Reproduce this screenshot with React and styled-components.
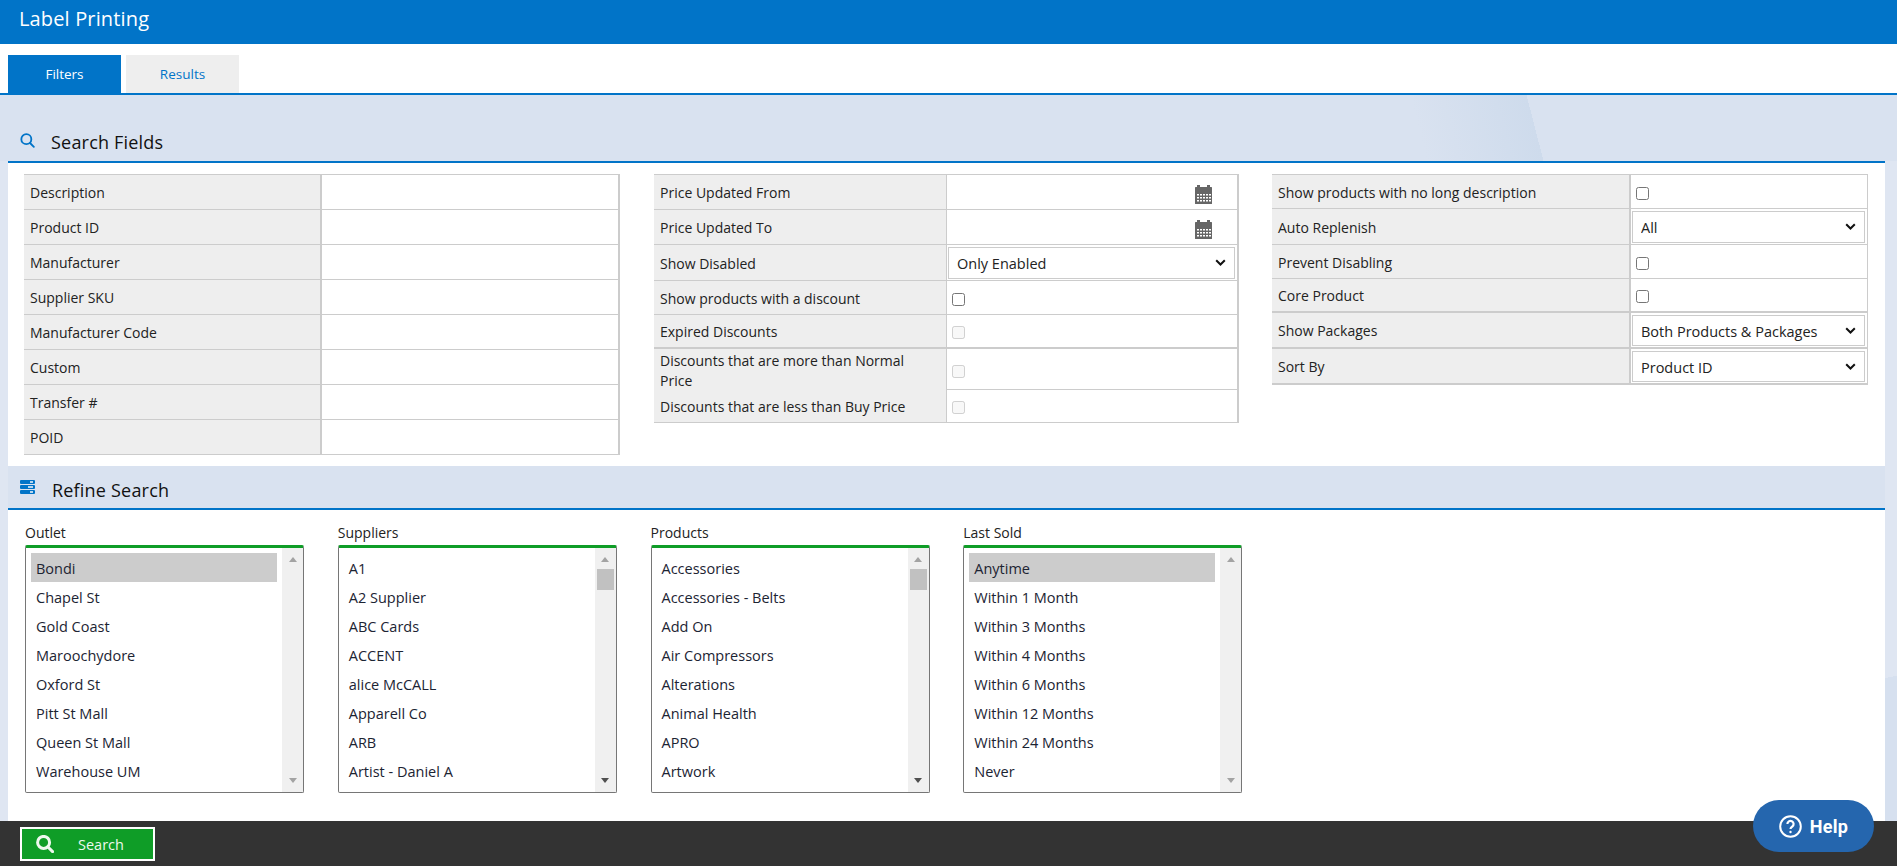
import React from 'react';
import styled, { createGlobalStyle } from 'styled-components';

const Global = createGlobalStyle`
  html, body { margin: 0; padding: 0; height: 100%; overflow: hidden; }
  body { font-family: "Open Sans", "Liberation Sans", sans-serif; font-size: 14px; color: #222; }
  * { box-sizing: border-box; }
`;

const BLUE = '#0174c8';
const GREEN = '#0f9d27';
const LINE = '#cccccc';
const CHEVRON = "url(\"data:image/svg+xml,%3Csvg xmlns='http://www.w3.org/2000/svg' width='11' height='7' viewBox='0 0 11 7'%3E%3Cpath d='M1.2 1.2l4.3 4.3 4.3-4.3' fill='none' stroke='%23111' stroke-width='2'/%3E%3C/svg%3E\")";

const Page = styled.div`
  height: 866px;
  display: flex;
  flex-direction: column;
  background: linear-gradient(168deg, #dfe6f2 0, #dfe6f2 85%, #d6e0ef 85%);
`;

const Header = styled.header`
  height: 44px;
  flex: none;
  background: ${BLUE};
  color: #fff;
  font-size: 20px;
  letter-spacing: 0.15px;
  line-height: 38px;
  padding-left: 19px;
`;

const TabBar = styled.nav`
  height: 51px;
  flex: none;
  display: flex;
  align-items: flex-end;
  gap: 5px;
  padding-left: 8px;
  background: #fff;
  border-bottom: 2px solid ${BLUE};
`;

const Tab = styled.button`
  width: 113px;
  height: 38px;
  border: 0;
  padding: 0;
  font: 13.5px "Open Sans", sans-serif;
  background: ${p => (p.$active ? BLUE : '#eeeeee')};
  color: ${p => (p.$active ? '#fff' : BLUE)};
`;

const Content = styled.main`
  flex: 1;
  min-height: 0;
  display: flex;
  flex-direction: column;
  padding: 0 12px 0 8px;
`;

const Band = styled.div`
  height: ${p => p.$height}px;
  flex: none;
  display: flex;
  align-items: flex-end;
  gap: ${p => p.$gap}px;
  padding: 0 0 ${p => p.$pad}px 12px;
  font-size: 18px;
  letter-spacing: 0.2px;
  line-height: 26px;
  color: #111;
  background: #d9e2f0;
`;

const TopBand = styled(Band)`
  margin: 0 -12px 0 -8px;
  padding-left: 20px;
  background: linear-gradient(75.6deg, transparent 1382px, #cedbec 1495px, transparent 1495px), #d9e2f0;
`;

const BandIcon = styled.span`
  flex: none;
  display: flex;
  margin-bottom: ${p => p.$lift}px;
  color: ${BLUE};
`;

const BandRule = styled.div`
  height: 2px;
  flex: none;
  background: ${BLUE};
`;

const FieldsPanel = styled.section`
  height: 303px;
  flex: none;
  background: #fff;
  padding: 11px 0 0 16px;
  display: grid;
  grid-template-columns: 630px 618px 596px;
  align-items: start;
`;

const Row = styled.div`
  height: ${p => p.$height}px;
  display: grid;
  grid-template-columns: ${p => p.$label}px 1fr;
  border-bottom: ${p => (p.$thick ? 2 : 1)}px solid ${LINE};
`;

const Label = styled.div`
  display: flex;
  align-items: center;
  padding: 2px 20px 0 6px;
  line-height: 20px;
  background: #eeeeee;
`;

const FieldTable = styled.div`
  width: ${p => p.$width}px;
  border-top: 1px solid ${LINE};
  border-right: ${p => p.$edge}px solid ${LINE};
  background: #fff;

  ${Label} {
    border-right: ${p => p.$divider}px solid ${LINE};
  }
`;

const Value = styled.div`
  display: flex;
  align-items: center;
  min-width: 0;
`;

const TextInput = styled.input`
  width: 100%;
  height: 100%;
  border: 0;
  outline: 0;
  padding: 0 6px;
  background: transparent;
`;

const DateCell = styled(Value)`
  justify-content: flex-end;
  padding: 4px 25px 0 0;
`;

const Check = styled.input.attrs({ type: 'checkbox' })`
  margin: 3px 0 0 5px;
  width: 13px;
  height: 13px;
`;

const Select = styled.select`
  appearance: none;
  width: 100%;
  height: calc(100% - 3px);
  margin: 0 2px 0 1px;
  border: 1px solid ${LINE};
  border-radius: 0;
  background: #fff ${CHEVRON} no-repeat right 8px center;
  color: #222;
  padding: 2px 0 0 8px;
  font: 14.5px "Open Sans", sans-serif;
  outline: 0;
`;

const RefinePanel = styled.section`
  flex: 1;
  min-height: 0;
  background: #fff;
  padding: 13px 0 0 17px;
  display: flex;
  gap: 33.75px;
  align-items: flex-start;
`;

const ListColumn = styled.div`
  width: 279px;
  flex: none;
`;

const ListTitle = styled.div`
  line-height: 20px;
  margin-bottom: 2px;
`;

const ListBox = styled.div`
  height: 248px;
  display: flex;
  border: 1px solid #767676;
  border-top: 3px solid ${GREEN};
  border-radius: 2px;
  background: #fff;
`;

const Items = styled.ul`
  flex: 1;
  min-width: 0;
  list-style: none;
  margin: 0;
  padding: 5px 5px 0;
`;

const Item = styled.li`
  height: 29px;
  line-height: 31px;
  padding-left: 5px;
  font-size: 14.5px;
  color: #1c2433;
  background: ${p => (p.$selected ? '#cccccc' : 'transparent')};
`;

const ScrollBar = styled.div`
  width: 21px;
  flex: none;
  display: flex;
  flex-direction: column;
  align-items: center;
  padding: 9px 0 9px;
  background: #f0f0f0;
`;

const ArrowUp = styled.span`
  width: 0;
  height: 0;
  border-left: 4.5px solid transparent;
  border-right: 4.5px solid transparent;
  border-bottom: 5px solid #a3a3a3;
`;

const ArrowDown = styled.span`
  width: 0;
  height: 0;
  margin-top: auto;
  border-left: 4.5px solid transparent;
  border-right: 4.5px solid transparent;
  border-top: 5px solid ${p => (p.$on ? '#505050' : '#a3a3a3')};
`;

const Thumb = styled.span`
  width: 17px;
  height: 21px;
  margin-top: 7px;
  background: #c1c1c1;
`;

const Footer = styled.footer`
  height: 45px;
  flex: none;
  background: #333333;
  padding: 6px 0 0 20px;
`;

const SearchButton = styled.button`
  width: 135px;
  height: 34px;
  display: flex;
  align-items: center;
  gap: 24px;
  padding: 0 0 0 14px;
  border: 2px solid #fff;
  background: ${GREEN};
  color: #eef8ee;
  font: 14.5px "Open Sans", sans-serif;
`;

const HelpButton = styled.button`
  position: fixed;
  right: 23px;
  bottom: 14px;
  width: 121px;
  height: 52px;
  border: 0;
  border-radius: 26px;
  background: #2566ae;
  color: #fff;
  display: flex;
  align-items: center;
  justify-content: center;
  gap: 8px;
  font: 700 18px Roboto, sans-serif;
  letter-spacing: 0.3px;
`;

const SearchIcon = ({ size, stroke = 2.2 }) => (
  <svg width={size} height={size} viewBox="0 0 18 18" fill="none" stroke="currentColor" strokeWidth={stroke} strokeLinecap="round">
    <circle cx="7.6" cy="7.4" r="6" />
    <path d="M12 12l4.6 4.6" />
  </svg>
);

const CalendarIcon = () => (
  <svg width="17" height="19" viewBox="0 0 17 19" fill="#666">
    <rect x="2" y="0" width="3" height="3" />
    <rect x="12" y="0" width="3" height="3" />
    <rect x="0" y="2" width="17" height="17" rx="0.5" />
    <g fill="#fff">
      {[9, 12, 15].map(y => [2, 5, 8, 11, 14].map(x => <rect key={`${x}${y}`} x={x} y={y} width="2" height="1.5" />))}
    </g>
  </svg>
);

const ServerIcon = () => (
  <svg width="15" height="14" viewBox="0 0 15 14">
    {[0, 5, 10].map(y => (
      <g key={y}>
        <rect x="0" y={y} width="15" height="4" rx="1" fill="currentColor" />
        <rect x={y === 5 ? 8 : 10} y={y + 1.2} width={y === 5 ? 5 : 3} height="1.6" fill="#e6eef8" />
      </g>
    ))}
  </svg>
);

const HelpIcon = () => (
  <svg width="23" height="23" viewBox="0 0 23 23" fill="none" stroke="currentColor" strokeWidth="2">
    <circle cx="11.5" cy="11.5" r="10.3" />
    <path d="M8.4 9a3.1 3.1 0 1 1 4.9 2.5c-1.2.8-1.8 1.3-1.8 2.6" strokeWidth="2.2" />
    <circle cx="11.5" cy="17" r="1.2" fill="currentColor" stroke="none" />
  </svg>
);

const col1 = ['Description', 'Product ID', 'Manufacturer', 'Supplier SKU', 'Manufacturer Code', 'Custom', 'Transfer #', 'POID'];

const lists = [
  { title: 'Outlet', selected: 0, more: false, items: ['Bondi', 'Chapel St', 'Gold Coast', 'Maroochydore', 'Oxford St', 'Pitt St Mall', 'Queen St Mall', 'Warehouse UM'] },
  { title: 'Suppliers', selected: -1, more: true, items: ['A1', 'A2 Supplier', 'ABC Cards', 'ACCENT', 'alice McCALL', 'Apparell Co', 'ARB', 'Artist - Daniel A'] },
  { title: 'Products', selected: -1, more: true, items: ['Accessories', 'Accessories - Belts', 'Add On', 'Air Compressors', 'Alterations', 'Animal Health', 'APRO', 'Artwork'] },
  { title: 'Last Sold', selected: 0, more: false, items: ['Anytime', 'Within 1 Month', 'Within 3 Months', 'Within 4 Months', 'Within 6 Months', 'Within 12 Months', 'Within 24 Months', 'Never'] },
];

export default function App() {
  return (
    <Page>
      <Global />
      <Header>Label Printing</Header>
      <TabBar>
        <Tab $active>Filters</Tab>
        <Tab>Results</Tab>
      </TabBar>
      <Content>
        <TopBand $height={66} $gap={16} $pad={6}>
          <BandIcon $lift={7}><SearchIcon size={15} /></BandIcon>
          Search Fields
        </TopBand>
        <BandRule />
        <FieldsPanel>
          <FieldTable $width={596} $edge={2} $divider={2}>
            {col1.map(l => (
              <Row key={l} $height={35} $label={298}>
                <Label>{l}</Label>
                <Value><TextInput /></Value>
              </Row>
            ))}
          </FieldTable>

          <FieldTable $width={585} $edge={2} $divider={1}>
            <Row $height={35} $label={293}><Label>Price Updated From</Label><DateCell><CalendarIcon /></DateCell></Row>
            <Row $height={35} $label={293}><Label>Price Updated To</Label><DateCell><CalendarIcon /></DateCell></Row>
            <Row $height={36} $label={293}>
              <Label>Show Disabled</Label>
              <Value><Select defaultValue="Only Enabled"><option>Only Enabled</option></Select></Value>
            </Row>
            <Row $height={34} $label={293}><Label>Show products with a discount</Label><Value><Check /></Value></Row>
            <Row $height={34} $label={293} $thick><Label>Expired Discounts</Label><Value><Check disabled /></Value></Row>
            <Row $height={41} $label={293}><Label>Discounts that are more than Normal Price</Label><Value><Check disabled /></Value></Row>
            <Row $height={33} $label={293}><Label>Discounts that are less than Buy Price</Label><Value><Check disabled /></Value></Row>
          </FieldTable>

          <FieldTable $width={596} $edge={1} $divider={2}>
            <Row $height={34} $label={359}><Label>Show products with no long description</Label><Value><Check /></Value></Row>
            <Row $height={36} $label={359}>
              <Label>Auto Replenish</Label>
              <Value><Select defaultValue="All"><option>All</option></Select></Value>
            </Row>
            <Row $height={34} $label={359}><Label>Prevent Disabling</Label><Value><Check /></Value></Row>
            <Row $height={34} $label={359} $thick><Label>Core Product</Label><Value><Check /></Value></Row>
            <Row $height={36} $label={359} $thick>
              <Label>Show Packages</Label>
              <Value><Select defaultValue="Both Products &amp; Packages"><option>Both Products &amp; Packages</option></Select></Value>
            </Row>
            <Row $height={36} $label={359} $thick>
              <Label>Sort By</Label>
              <Value><Select defaultValue="Product ID"><option>Product ID</option></Select></Value>
            </Row>
          </FieldTable>
        </FieldsPanel>

        <Band $height={42} $gap={17} $pad={5}>
          <BandIcon $lift={9}><ServerIcon /></BandIcon>
          Refine Search
        </Band>
        <BandRule />
        <RefinePanel>
          {lists.map(list => (
            <ListColumn key={list.title}>
              <ListTitle>{list.title}</ListTitle>
              <ListBox>
                <Items>
                  {list.items.map((item, i) => (
                    <Item key={item} $selected={i === list.selected}>{item}</Item>
                  ))}
                </Items>
                <ScrollBar>
                  <ArrowUp />
                  {list.more && <Thumb />}
                  <ArrowDown $on={list.more} />
                </ScrollBar>
              </ListBox>
            </ListColumn>
          ))}
        </RefinePanel>
      </Content>
      <Footer>
        <SearchButton><SearchIcon size={18} stroke={3} />Search</SearchButton>
      </Footer>
      <HelpButton><HelpIcon />Help</HelpButton>
    </Page>
  );
}
